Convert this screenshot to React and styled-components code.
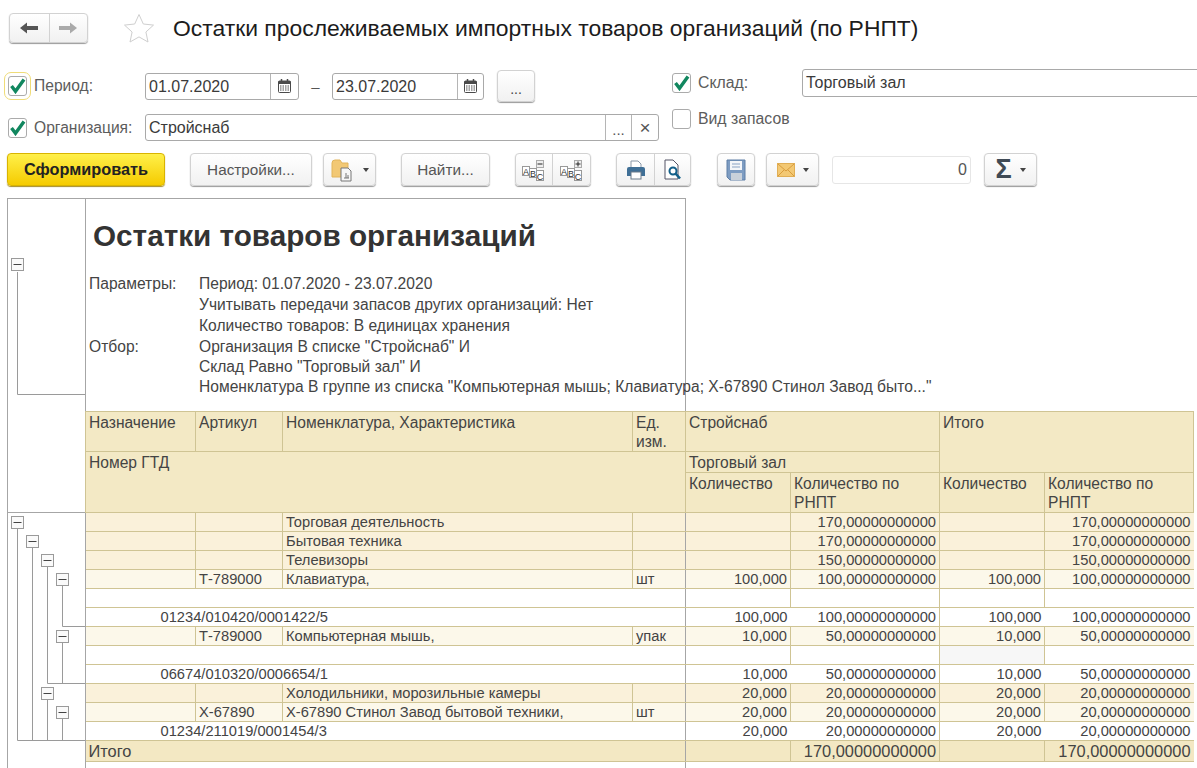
import React from 'react'
import styled, { createGlobalStyle } from 'styled-components'

const GlobalStyle = createGlobalStyle`
    html, body {
        margin: 0;
        height: 768px;
        overflow: hidden;
        background: #fff;
    }
    #root {
        height: 768px;
    }
`

const params = [
    ['Параметры:', 'Период: 01.07.2020 - 23.07.2020'],
    ['', 'Учитывать передачи запасов других организаций: Нет'],
    ['', 'Количество товаров: В единицах хранения'],
    ['Отбор:', 'Организация В списке "Стройснаб" И'],
    ['', 'Склад Равно "Торговый зал" И'],
    ['', 'Номенклатура В группе из списка "Компьютерная мышь; Клавиатура; Х-67890 Стинол Завод быто..."'],
]

const rows = [
    { type: 'group', nom: 'Торговая деятельность', r1: '170,00000000000', r2: '170,00000000000' },
    { type: 'group', nom: 'Бытовая техника', r1: '170,00000000000', r2: '170,00000000000' },
    { type: 'group', nom: 'Телевизоры', r1: '150,00000000000', r2: '150,00000000000' },
    { type: 'detail', art: 'Т-789000', nom: 'Клавиатура,', unit: 'шт', q1: '100,000', r1: '100,00000000000', q2: '100,000', r2: '100,00000000000' },
    { type: 'blank' },
    { type: 'gtd', gtd: '01234/010420/0001422/5', q1: '100,000', r1: '100,00000000000', q2: '100,000', r2: '100,00000000000' },
    { type: 'detail', art: 'Т-789000', nom: 'Компьютерная мышь,', unit: 'упак', q1: '10,000', r1: '50,00000000000', q2: '10,000', r2: '50,00000000000' },
    { type: 'blank', haze: true },
    { type: 'gtd', gtd: '06674/010320/0006654/1', q1: '10,000', r1: '50,00000000000', q2: '10,000', r2: '50,00000000000' },
    { type: 'group', nom: 'Холодильники, морозильные камеры', q1: '20,000', r1: '20,00000000000', q2: '20,000', r2: '20,00000000000' },
    { type: 'detail', art: 'Х-67890', nom: 'Х-67890 Стинол Завод бытовой техники,', unit: 'шт', q1: '20,000', r1: '20,00000000000', q2: '20,000', r2: '20,00000000000' },
    { type: 'gtd', gtd: '01234/211019/0001454/3', q1: '20,000', r1: '20,00000000000', q2: '20,000', r2: '20,00000000000' },
]

// tree in the left margin, coordinates are relative to the margin's corner
const treeBoxes = [[9, 10], [24, 29], [39, 48], [54, 67], [54, 124], [39, 181], [54, 200]]
const treeLines = [
    'M9 16V228H77',
    'M24 35V228',
    'M39 54V171H77',
    'M39 187V228',
    'M54 73V114H77',
    'M54 130V171',
    'M54 206V228',
]

const MinusBox = ({ x, y }) => (
    <g>
        <rect x={x - 6} y={y - 6} width="12" height="12" fill="#fafafa" stroke="#9a9a9a" />
        <path d={`M${x - 4} ${y}H${x + 4}`} stroke="#444" />
    </g>
)

const CheckMark = () => (
    <svg width="17" height="16" viewBox="0 0 17 16">
        <path d="M2.500 8l4 5.300L15 1.500" fill="none" stroke="#11875f" strokeWidth="3.400" />
    </svg>
)

const CalendarIcon = () => (
    <svg width="13" height="14" viewBox="0 0 13 14">
        <rect x="0.5" y="2" width="12" height="11.5" rx="1" fill="#fff" stroke="#4a4a4a" />
        <rect x="0.5" y="2" width="12" height="3" fill="#4a4a4a" />
        <path d="M3.5 0v3M9.5 0v3" stroke="#4a4a4a" strokeWidth="1.5" />
        <path d="M2 7h9M2 9h9M2 11h9" stroke="#4a4a4a" strokeDasharray="1.5 1" />
    </svg>
)

const AbcIcon = ({ plus }) => (
    <svg width="24" height="24" viewBox="0 0 24 24">
        <rect x="0.5" y="8.500" width="7" height="9" fill="#fff" stroke="#999" />
        <rect x="7.500" y="10.500" width="7" height="9" fill="#fff" stroke="#999" />
        <rect x="14.500" y="12.500" width="7" height="10" fill="#fff" stroke="#999" />
        <text x="4" y="16.500" fontSize="9" textAnchor="middle" fontFamily="Liberation Sans" fill="#333">A</text>
        <text x="11" y="18.500" fontSize="9" textAnchor="middle" fontFamily="Liberation Sans" fill="#333">B</text>
        <text x="18" y="21.500" fontSize="9" textAnchor="middle" fontFamily="Liberation Sans" fill="#333">C</text>
        <rect x="14.500" y="2.500" width="7" height="7" fill="#eee" stroke="#aaa" />
        <path d={plus ? 'M15.500 6h5M18 3.500v5' : 'M15.500 6h5'} stroke="#222" />
    </svg>
)

const FolderIcon = () => (
    <svg width="24" height="24" viewBox="0 0 24 24">
        <path d="M1 5q0-3 3-3h5l2 3h6v14H1z" fill="#f2c874" stroke="#e2b45a" />
        <path d="M10 10h7l3 3v10H10z" fill="#f7f7f7" stroke="#777" />
        <path d="M13 20h5M15 15v5M17 17v3" stroke="#777" />
    </svg>
)

const PrinterIcon = () => (
    <svg width="20" height="20" viewBox="0 0 20 20">
        <path d="M5 1h7l3 3v5H5z" fill="#fff" stroke="#8a98a8" />
        <path d="M1 9q0-2 2-2h14q2 0 2 2v7H1z" fill="#3f6f96" />
        <rect x="5" y="12" width="10" height="7" fill="#fff" stroke="#6a7a8a" />
    </svg>
)

const PreviewIcon = () => (
    <svg width="18" height="22" viewBox="0 0 18 22">
        <path d="M1 1h8l5 5v14H1z" fill="#fff" stroke="#556" />
        <circle cx="9" cy="12" r="3.5" fill="#fff" stroke="#14608a" strokeWidth="2" />
        <path d="M11.5 14.5l4.5 5" stroke="#14608a" strokeWidth="2.6" />
    </svg>
)

const SaveIcon = () => (
    <svg width="20" height="22" viewBox="0 0 20 22">
        <path d="M1 1h18v20H4l-3-3z" fill="#7d9cc2" stroke="#5f7fa6" />
        <rect x="4" y="2" width="12" height="9" fill="#f4f6f9" />
        <path d="M6 5h8M6 8h8" stroke="#8aa3c4" />
        <rect x="5" y="14" width="11" height="7" fill="#c9d1da" />
    </svg>
)

const MailIcon = () => (
    <svg width="18" height="14" viewBox="0 0 18 14">
        <rect x="0.5" y="0.5" width="17" height="13" fill="#f3c873" stroke="#e0ae55" />
        <path d="M1 1l8 7 8-7M1 13l6-6M17 13l-6-6" fill="none" stroke="#d99c3c" />
    </svg>
)

const App = () => {
    return (
        <Page>
            <GlobalStyle />
            <Header>
                <BtnGroup>
                    <NavBtn>
                        <svg width="18" height="12" viewBox="0 0 18 12"><path d="M0 6l7-5.500V4h11v4H7v3.500z" fill="#555" /></svg>
                    </NavBtn>
                    <NavBtn>
                        <svg width="18" height="12" viewBox="0 0 18 12"><path d="M18 6l-7-5.500V4H0v4h11v3.500z" fill="#aaa" /></svg>
                    </NavBtn>
                </BtnGroup>
                <StarIcon width="32" height="30" viewBox="0 0 32 30">
                    <path d="M16 1.500l4.300 9.500 10.200 1.100-7.600 6.900 2.100 10-9-5.100-9 5.100 2.100-10-7.600-6.900 10.200-1.100z" fill="none" stroke="#cfcfcf" />
                </StarIcon>
                <PageTitle>Остатки прослеживаемых импортных товаров организаций (по РНПТ)</PageTitle>
            </Header>

            <Filters>
                <FilterLeft>
                    <PeriodRow>
                        <Check $focus><CheckMark /></Check>
                        <FieldLabel>Период:</FieldLabel>
                        <Field $w={154}>
                            <FieldText>01.07.2020</FieldText>
                            <FieldBtn $w={27}><CalendarIcon /></FieldBtn>
                        </Field>
                        <Dash>–</Dash>
                        <Field $w={152}>
                            <FieldText>23.07.2020</FieldText>
                            <FieldBtn $w={25}><CalendarIcon /></FieldBtn>
                        </Field>
                        <DotsBtn>...</DotsBtn>
                    </PeriodRow>
                    <OrgRow>
                        <Check><CheckMark /></Check>
                        <FieldLabel>Организация:</FieldLabel>
                        <Field $w={514}>
                            <FieldText>Стройснаб</FieldText>
                            <FieldBtn $w={25} $dots>...</FieldBtn>
                            <FieldBtn $w={26} $big>×</FieldBtn>
                        </Field>
                    </OrgRow>
                </FilterLeft>
                <FilterRight>
                    <StockRow>
                        <Check><CheckMark /></Check>
                        <SideLabel $w={104}>Склад:</SideLabel>
                        <Field $w={420} $h={28}>
                            <FieldText>Торговый зал</FieldText>
                        </Field>
                    </StockRow>
                    <KindRow>
                        <Check />
                        <SideLabel>Вид запасов</SideLabel>
                    </KindRow>
                </FilterRight>
            </Filters>

            <CommandBar>
                <GenerateBtn>Сформировать</GenerateBtn>
                <TextBtn $w={122} $gap={25}>Настройки...</TextBtn>
                <IconBtn $w={53} $gap={11}><FolderIcon /><Caret /></IconBtn>
                <TextBtn $w={89} $gap={25}>Найти...</TextBtn>
                <BtnGroup $gap={25}>
                    <GroupIconBtn $w={36}><AbcIcon /></GroupIconBtn>
                    <GroupIconBtn $w={37}><AbcIcon plus /></GroupIconBtn>
                </BtnGroup>
                <BtnGroup $gap={25}>
                    <GroupIconBtn $w={37}><PrinterIcon /></GroupIconBtn>
                    <GroupIconBtn $w={35}><PreviewIcon /></GroupIconBtn>
                </BtnGroup>
                <IconBtn $w={38} $gap={26}><SaveIcon /></IconBtn>
                <IconBtn $w={53} $gap={11}><MailIcon /><Caret /></IconBtn>
                <SumField>0</SumField>
                <IconBtn $w={53} $gap={13}><Sigma>Σ</Sigma><Caret /></IconBtn>
            </CommandBar>

            <Report>
                <ReportHead>
                    <Gutter>
                        <svg width="77" height="212" viewBox="0 0 77 212">
                            <path d="M9.500 73V195.500H77" fill="none" stroke="#9a9a9a" />
                            <MinusBox x={9.5} y={65.5} />
                        </svg>
                    </Gutter>
                    <HeadMain>
                        <ReportTitle>Остатки товаров организаций</ReportTitle>
                        <ParamList>
                            {params.map(([label, text], i) => (
                                <React.Fragment key={i}>
                                    <span>{label}</span>
                                    <span>{text}</span>
                                </React.Fragment>
                            ))}
                        </ParamList>
                    </HeadMain>
                </ReportHead>

                <ReportBody>
                    <Gutter>
                        <GutterTop />
                        <TreeSvg width="77" height="229" viewBox="0 0 77 229">
                            {treeLines.map((d) => (
                                <path key={d} d={d} transform="translate(0.5 0.5)" fill="none" stroke="#9a9a9a" />
                            ))}
                            {treeBoxes.map(([x, y]) => (
                                <MinusBox key={`${x}-${y}`} x={x + 0.5} y={y + 0.5} />
                            ))}
                        </TreeSvg>
                    </Gutter>
                    <Table>
                        <colgroup>
                            <col width="110" />
                            <col width="87" />
                            <col width="350" />
                            <col width="53" />
                            <col width="105" />
                            <col width="149" />
                            <col width="105" />
                            <col width="149" />
                        </colgroup>
                        <thead>
                            <tr>
                                <Th $h={40}>Назначение</Th>
                                <Th>Артикул</Th>
                                <Th>Номенклатура, Характеристика</Th>
                                <Th>Ед. изм.</Th>
                                <Th colSpan={2}>Стройснаб</Th>
                                <Th colSpan={2} rowSpan={2}>Итого</Th>
                            </tr>
                            <tr>
                                <Th $h={21} colSpan={4} rowSpan={2}>Номер ГТД</Th>
                                <Th colSpan={2}>Торговый зал</Th>
                            </tr>
                            <tr>
                                <Th $h={40}>Количество</Th>
                                <Th>Количество по РНПТ</Th>
                                <Th>Количество</Th>
                                <Th>Количество по РНПТ</Th>
                            </tr>
                        </thead>
                        <tbody>
                            {rows.map((row, i) => (
                                <ReportRow key={i} row={row} />
                            ))}
                            <TotalRow>
                                <TotalCell colSpan={4}>Итого</TotalCell>
                                <TotalCell $line="gray" />
                                <TotalCell $line="tan" $num>170,00000000000</TotalCell>
                                <TotalCell $line="tan" />
                                <TotalCell $line="tan" $num>170,00000000000</TotalCell>
                            </TotalRow>
                        </tbody>
                    </Table>
                </ReportBody>
                <ReportTail />
            </Report>
        </Page>
    )
}

const ReportRow = ({ row }) => {
    const { type, art, nom, unit, gtd, q1, r1, q2, r2, haze } = row
    const split = type !== 'gtd' ? 'tan' : undefined

    return (
        <Tr $type={type}>
            {type === 'group' || type === 'detail' ? (
                <>
                    <Td />
                    <Td $line="tan">{art}</Td>
                    <Td $line="tan">{nom}</Td>
                    <Td $line="tan">{unit}</Td>
                </>
            ) : (
                <GtdCell colSpan={4}>{gtd}</GtdCell>
            )}
            <Td $line="gray" $num>{q1}</Td>
            <Td $line={split} $num>{r1}</Td>
            <Td $line="tan" $num $haze={haze}>{q2}</Td>
            <Td $line={split} $num>{r2}</Td>
        </Tr>
    )
}

const FONT = `"Liberation Sans", Arial, sans-serif`
const TAN = '#cfc494'
const GRAY = '#a6a6a6'

const Page = styled.div`
    width: 1197px;
    height: 768px;
    overflow: hidden;
    display: flex;
    flex-direction: column;
    font-family: ${FONT};
    color: #3c3c3c;
`

const Header = styled.div`
    display: flex;
    align-items: center;
    height: 30px;
    margin-top: 13px;
    padding-left: 9px;
    flex-shrink: 0;
`

const buttonFace = `
    box-sizing: border-box;
    display: flex;
    align-items: center;
    justify-content: center;
    border: 1px solid #d2d2d2;
    border-radius: 4px;
    background: linear-gradient(#ffffff, #f1f1f1);
    box-shadow: 0 1px 1px #9a9a9a;
    flex-shrink: 0;
`

const BtnGroup = styled.div`
    ${buttonFace}
    margin-left: ${(p) => p.$gap || 0}px;
    height: 100%;
`

const NavBtn = styled.div`
    box-sizing: border-box;
    width: 38.500px;
    height: 100%;
    display: flex;
    align-items: center;
    justify-content: center;
    & + & {
        border-left: 1px solid #d2d2d2;
    }
`

const StarIcon = styled.svg`
    margin-left: 35px;
    flex-shrink: 0;
`

const PageTitle = styled.h1`
    margin: 0 0 0 18px;
    font-size: 22.900px;
    font-weight: normal;
    color: #1c1c1c;
    white-space: nowrap;
`

const Filters = styled.div`
    display: flex;
    margin-top: 26px;
    height: 72px;
    flex-shrink: 0;
`

const FilterLeft = styled.div`
    width: 672px;
    padding-left: 8px;
    box-sizing: border-box;
    flex-shrink: 0;
`

const PeriodRow = styled.div`
    display: flex;
    align-items: center;
    height: 34px;
`

const OrgRow = styled.div`
    display: flex;
    align-items: center;
    height: 27px;
    margin-top: 11px;
`

const FilterRight = styled.div`
    flex: 1;
    min-width: 0;
`

const StockRow = styled.div`
    display: flex;
    align-items: center;
    height: 28px;
`

const KindRow = styled.div`
    display: flex;
    align-items: center;
    height: 20px;
    margin-top: 12px;
`

const Check = styled.div`
    box-sizing: border-box;
    width: 19px;
    height: 20px;
    border: 1px solid #ababab;
    border-radius: 3px;
    background: #fff;
    display: flex;
    align-items: center;
    justify-content: center;
    flex-shrink: 0;
    outline: ${(p) => (p.$focus ? '1px solid #efdc78' : 'none')};
    outline-offset: 3px;
`

const FieldLabel = styled.label`
    width: 111px;
    margin-left: 7px;
    font-size: 15.600px;
    color: #5c5c5c;
    flex-shrink: 0;
`

const SideLabel = styled.label`
    width: ${(p) => (p.$w ? `${p.$w}px` : 'auto')};
    margin-left: 7px;
    font-size: 15.800px;
    color: #5c5c5c;
    flex-shrink: 0;
`

const Field = styled.div`
    box-sizing: border-box;
    display: flex;
    width: ${(p) => p.$w}px;
    height: ${(p) => p.$h || 27}px;
    border: 1px solid #a9a9a9;
    border-radius: 3px;
    background: #fff;
    flex-shrink: 0;
`

const FieldText = styled.div`
    flex: 1;
    padding-left: 3px;
    font-size: 16px;
    line-height: 26px;
    color: #3a3a3a;
    white-space: nowrap;
`

const FieldBtn = styled.div`
    width: ${(p) => p.$w}px;
    border-left: 1px solid #b5b5b5;
    display: flex;
    align-items: center;
    justify-content: center;
    padding-top: ${(p) => (p.$dots ? 4 : 0)}px;
    box-sizing: content-box;
    font-size: ${(p) => (p.$big ? 19 : 15)}px;
    color: #555;
`

const Dash = styled.span`
    width: 33px;
    text-align: center;
    font-size: 15px;
    color: #555;
    flex-shrink: 0;
`

const DotsBtn = styled.div`
    ${buttonFace}
    width: 38px;
    height: 32px;
    margin-left: 13px;
    padding-top: 5px;
    font-size: 14px;
    color: #444;
`

const CommandBar = styled.div`
    display: flex;
    align-items: center;
    height: 33px;
    margin-top: 12px;
    padding-left: 7px;
    flex-shrink: 0;
`

const GenerateBtn = styled.div`
    ${buttonFace}
    width: 158px;
    height: 100%;
    border-color: #d9b400;
    background: linear-gradient(#fff04a, #f5cb00);
    box-shadow: 0 1px 1px #a58c2a;
    font-size: 16.300px;
    font-weight: bold;
    color: #222;
`

const TextBtn = styled.div`
    ${buttonFace}
    width: ${(p) => p.$w}px;
    height: 100%;
    margin-left: ${(p) => p.$gap}px;
    font-size: 15.300px;
    color: #555;
`

const IconBtn = styled.div`
    ${buttonFace}
    gap: 8px;
    width: ${(p) => p.$w}px;
    height: 100%;
    margin-left: ${(p) => p.$gap}px;
`

const GroupIconBtn = styled.div`
    box-sizing: content-box;
    width: ${(p) => p.$w}px;
    height: 100%;
    display: flex;
    align-items: center;
    justify-content: center;
    & + & {
        border-left: 1px solid #d2d2d2;
    }
`

const Caret = styled.span`
    width: 0;
    height: 0;
    border-left: 3.500px solid transparent;
    border-right: 3.500px solid transparent;
    border-top: 4px solid #444;
`

const Sigma = styled.span`
    font-size: 27px;
    font-weight: bold;
    line-height: 1;
    color: #3f4a55;
`

const SumField = styled.div`
    box-sizing: border-box;
    width: 139px;
    height: 28px;
    margin-left: 13px;
    padding-right: 3px;
    border: 1px solid #e6e6e6;
    border-radius: 3px;
    text-align: right;
    font-size: 16px;
    line-height: 26px;
    color: #555;
    flex-shrink: 0;
`

const Report = styled.div`
    display: flex;
    flex-direction: column;
    flex: 1;
    margin: 12px 0 0 7px;
    border-left: 1px solid ${GRAY};
    min-height: 0;
`

const ReportHead = styled.div`
    display: flex;
    width: 678px;
    height: 213px;
    box-sizing: border-box;
    border-top: 1px solid ${GRAY};
    flex-shrink: 0;
`

const Gutter = styled.div`
    box-sizing: content-box;
    width: 77px;
    border-right: 1px solid ${GRAY};
    flex-shrink: 0;
    svg {
        display: block;
    }
`

const GutterTop = styled.div`
    box-sizing: border-box;
    height: 102px;
    border-bottom: 1px solid ${GRAY};
`

const TreeSvg = styled.svg`
    margin-top: -1px;
`

const HeadMain = styled.div`
    width: 600px;
    border-right: 1px solid ${GRAY};
    padding-left: 3px;
    box-sizing: border-box;
    white-space: nowrap;
`

const ReportTitle = styled.h2`
    margin: 20px 0 0 4px;
    font-size: 29.700px;
    line-height: 34px;
    font-weight: bold;
    color: #333;
`

const ParamList = styled.div`
    display: grid;
    grid-template-columns: 110px auto;
    grid-template-rows: 21px 21px 21px 19.500px 20px 20px;
    margin-top: 21px;
    font-size: 15.600px;
    line-height: 20px;
    color: #444;
`

const ReportBody = styled.div`
    display: flex;
    flex-shrink: 0;
`

const ReportTail = styled.div`
    flex: 1;
    width: 599px;
    margin-left: 77px;
    border-left: 1px solid ${GRAY};
    border-right: 1px solid ${GRAY};
`

const Table = styled.table`
    table-layout: fixed;
    width: 1108px;
    margin-left: -1px;
    border-collapse: collapse;
    font-size: 14.700px;
    color: #444;
    align-self: flex-start;
`

const Th = styled.th`
    height: ${(p) => (p.$h ? `${p.$h}px` : 'auto')};
    box-sizing: border-box;
    padding: 1px 3px 0;
    border: 1px solid ${TAN};
    background: #f3e9c5;
    font-size: 15.600px;
    font-weight: normal;
    text-align: left;
    vertical-align: top;
    line-height: 19px;
`

const rowBg = { group: '#faf1da', detail: '#fcf8ea', blank: '#fff', gtd: '#fff' }

const Tr = styled.tr`
    height: 19px;
    background: ${(p) => rowBg[p.$type]};
`

const lineColor = (p) => (p.$line === 'gray' ? GRAY : TAN)

const Td = styled.td`
    box-sizing: border-box;
    height: 19px;
    padding: 0 3px;
    border-top: 1px solid ${TAN};
    border-bottom: 1px solid ${TAN};
    border-left: ${(p) => (p.$line ? `1px solid ${lineColor(p)}` : 'none')};
    background: ${(p) => (p.$haze ? '#f7f7f7' : 'transparent')};
    text-align: ${(p) => (p.$num ? 'right' : 'left')};
    line-height: 17px;
    white-space: nowrap;
    overflow: hidden;
`

const GtdCell = styled(Td)`
    padding-left: 75px;
`

const TotalRow = styled.tr`
    height: 21px;
    background: #f3e8c3;
`

const TotalCell = styled.td`
    box-sizing: border-box;
    padding: 0 3px;
    border-top: 1px solid ${TAN};
    border-bottom: 1px solid ${TAN};
    border-left: ${(p) => (p.$line ? `1px solid ${lineColor(p)}` : 'none')};
    text-align: ${(p) => (p.$num ? 'right' : 'left')};
    font-size: 16.400px;
    line-height: 19px;
    white-space: nowrap;
`

export default App
